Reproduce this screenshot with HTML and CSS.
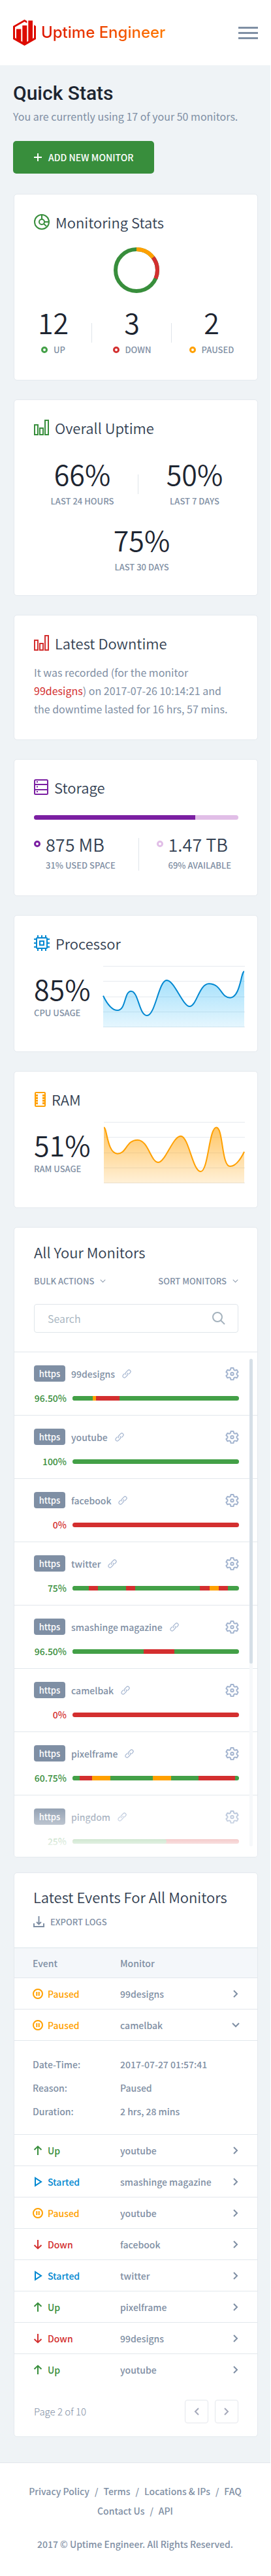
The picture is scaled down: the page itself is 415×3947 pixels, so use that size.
FILE: index.html
```html
<!DOCTYPE html>
<html lang="en">
<head>
<meta charset="utf-8">
<meta name="viewport" content="width=device-width, initial-scale=1">
<title>Uptime Engineer</title>
<link rel="stylesheet" href="styles.css">
</head>
<body>
<svg class="sprite" aria-hidden="true">
  <symbol id="i-link" viewBox="0 0 14 14"><path d="M6 8.200a2.600 2.600 0 0 1 0-3.600l2.700-2.800a2.500 2.500 0 0 1 3.600 3.600L10.600 7M8 5.800a2.600 2.600 0 0 1 0 3.600l-2.700 2.800a2.500 2.500 0 0 1-3.600-3.600L3.400 7"/></symbol>
  <symbol id="i-gear" viewBox="-1 0 21 20"><path d="M7.600 1h3.800l.8 2.900 1.600.9 2.900-.8 1.900 3.200-2.100 2.100v1.600l2.100 2.100-1.900 3.200-2.900-.8-1.600.9-.8 2.900H7.600l-.8-2.900-1.600-.9-2.900.8L.4 13l2.100-2.100V9.300L.4 7.200 2.300 4l2.900.8 1.600-.9z"/><circle cx="9.500" cy="10.100" r="2.200"/></symbol>
  <symbol id="i-right" viewBox="0 0 8 12"><path d="M1 1l5 5-5 5"/></symbol>
  <symbol id="i-left" viewBox="0 0 8 12"><path d="M7 1L2 6l5 5"/></symbol>
  <symbol id="i-down" viewBox="0 0 12 8"><path d="M1 1l5 5 5-5"/></symbol>
  <symbol id="i-bars" viewBox="0 0 23 24"><path d="M1 8h5v15H1zM9 13h5v10H9zM17 1h5v22h-5z"/></symbol>
  <symbol id="i-pause" viewBox="0 0 16 16"><circle cx="8" cy="8" r="7"/><path d="M6.300 5v6M9.700 5v6"/></symbol>
  <symbol id="i-up" viewBox="0 0 16 16"><path d="M8 15V2M2.500 7L8 1.800 13.500 7"/></symbol>
  <symbol id="i-dn" viewBox="0 0 16 16"><path d="M8 1v13M2.500 9L8 14.200 13.500 9"/></symbol>
  <symbol id="i-play" viewBox="0 0 16 16"><path d="M4 2.200v11.600L13 8z"/></symbol>
</svg>

<header class="topbar">
  <a class="brand" href="#">
    <svg class="brand-mark" viewBox="0 0 35 40" aria-hidden="true"><path d="M17.500 0 21.300 2.200V5.400L17.500 3.200 3 11.600V28L5 29.200V14.500H12.300V33L14.300 34V9H21.300V34L23.300 33V1.500H30V29.200L32 28V8.300L35 10V30L17.500 40 0 30V10Z"/></svg>
    <span class="brand-name">Uptime Engineer</span>
  </a>
  <button class="menu" aria-label="Menu"><span></span><span></span><span></span></button>
</header>

<main class="page">
  <h1 class="page-title">Quick Stats</h1>
  <p class="page-sub">You are currently using 17 of your 50 monitors.</p>
  <button class="add">
    <svg class="plus" viewBox="0 0 12 12" aria-hidden="true"><path d="M6 0v12M0 6h12"/></svg>ADD NEW MONITOR
  </button>

  <div class="cards">
    <section class="card">
      <h2 class="head">
        <svg class="icon24 green" viewBox="0 0 24 24" aria-hidden="true"><circle cx="12" cy="12" r="11"/><circle cx="12" cy="12" r="4"/><path d="M12 1v7M16 12h7M15 15l4 3.500"/></svg>
        Monitoring Stats
      </h2>
      <svg class="donut" viewBox="0 0 70 70" role="img" aria-label="12 up, 3 down, 2 paused">
        <circle class="d-up" cx="35" cy="35" r="32"/>
        <circle class="d-down" cx="35" cy="35" r="32" pathLength="100"/>
        <circle class="d-paused" cx="35" cy="35" r="32" pathLength="100"/>
      </svg>
      <div class="stats three">
        <div class="stat"><span class="num">12</span><span class="label"><i class="dot up"></i>UP</span></div>
        <div class="stat"><span class="num">3</span><span class="label"><i class="dot down"></i>DOWN</span></div>
        <div class="stat"><span class="num">2</span><span class="label"><i class="dot paused"></i>PAUSED</span></div>
      </div>
    </section>

    <section class="card tight">
      <h2 class="head"><svg class="icon23 green" aria-hidden="true"><use href="#i-bars"/></svg>Overall Uptime</h2>
      <div class="stats two">
        <div class="stat"><span class="num">66%</span><span class="label">LAST 24 HOURS</span></div>
        <div class="stat"><span class="num">50%</span><span class="label">LAST 7 DAYS</span></div>
        <div class="stat wide"><span class="num">75%</span><span class="label">LAST 30 DAYS</span></div>
      </div>
    </section>

    <section class="card tight">
      <h2 class="head"><svg class="icon23 red" aria-hidden="true"><use href="#i-bars"/></svg>Latest Downtime</h2>
      <p class="note">It was recorded (for the monitor <a href="#">99designs</a>) on 2017-07-26 10:14:21 and the downtime lasted for 16 hrs, 57 mins.</p>
    </section>

    <section class="card">
      <h2 class="head">
        <svg class="icon22 purple" viewBox="0 0 22 24" aria-hidden="true"><rect x="1" y="1" width="20" height="22" rx="1.500"/><path d="M1 8h20M1 16h20M4 4h2M4 11.500h2M4 19h2"/></svg>
        Storage
      </h2>
      <div class="bar storage"><span class="used" style="width:79%"></span></div>
      <div class="space">
        <div class="amount"><i class="dot used-dot"></i><div><span class="size">875 MB</span><span class="label">31% USED SPACE</span></div></div>
        <div class="amount"><i class="dot free-dot"></i><div><span class="size">1.47 TB</span><span class="label">69% AVAILABLE</span></div></div>
      </div>
    </section>

    <section class="card">
      <h2 class="head">
        <svg class="icon24 blue" viewBox="0 0 24 24" aria-hidden="true"><rect x="4" y="4" width="16" height="16" rx="1"/><rect x="9" y="9" width="6" height="6"/><path d="M6 0v4M12 0v4M18 0v4M6 20v4M12 20v4M18 20v4M0 6h4M0 12h4M0 18h4M20 6h4M20 12h4M20 18h4"/></svg>
        Processor
      </h2>
      <div class="usage">
        <div class="reading"><span class="num">85%</span><span class="label">CPU USAGE</span></div>
        <svg class="chart cpu" viewBox="0 0 217 95" aria-hidden="true">
          <defs><linearGradient id="g-cpu" x1="0" y1="0" x2="0" y2="1"><stop offset="0" stop-color="#03a9f4" stop-opacity=".4"/><stop offset="1" stop-color="#03a9f4" stop-opacity=".1"/></linearGradient></defs>
          <path class="grid" d="M0 .5h217M0 23.500h217M0 47.500h217M0 70.500h217M0 93.500h217"/>
          <path class="area" fill="url(#g-cpu)" d="M0 45.700C5 56 12 68 22 68C35 68 32 38.700 42.700 38.700C54 38.700 55 76 67 76C80 76 85 22 97.300 22C109 22 122 62 132.300 62C143 62 147 27.300 162 27.300C181 27.300 180 48.700 194.300 48.700C210 48.700 211 8.500 216 8.500V94H0z"/>
          <path class="line" d="M0 45.700C5 56 12 68 22 68C35 68 32 38.700 42.700 38.700C54 38.700 55 76 67 76C80 76 85 22 97.300 22C109 22 122 62 132.300 62C143 62 147 27.300 162 27.300C181 27.300 180 48.700 194.300 48.700C210 48.700 211 8.500 216 8.500"/>
        </svg>
      </div>
    </section>

    <section class="card">
      <h2 class="head">
        <svg class="icon18 amber" viewBox="0 0 18 24" aria-hidden="true"><rect x="2" y="2" width="15" height="21" rx="1"/><path class="pins" d="M4.500 5v15M14.500 5v15"/></svg>
        RAM
      </h2>
      <div class="usage">
        <div class="reading"><span class="num">51%</span><span class="label">RAM USAGE</span></div>
        <svg class="chart ram" viewBox="0 0 217 95" aria-hidden="true">
          <defs><linearGradient id="g-ram" x1="0" y1="0" x2="0" y2="1"><stop offset="0" stop-color="#ffa000" stop-opacity=".6"/><stop offset="1" stop-color="#ffa000" stop-opacity=".15"/></linearGradient></defs>
          <path class="grid" d="M1 .5h216M1 23.500h216M1 47.500h216M1 70.500h216M1 93.500h216"/>
          <path class="area" fill="url(#g-ram)" d="M1 8.500C6 8.500 6 48.700 22 48.700C36 48.700 35 27.700 52.700 27.700C69 27.700 73 62 84.300 62C95 62 107 21.700 118.700 21.700C131 21.700 137 76 149.300 76C161 76 162 8.500 173.300 8.500C184 8.500 181 68 194.300 68C204 68 211 56 216 45.700V94H1z"/>
          <path class="line" d="M1 8.500C6 8.500 6 48.700 22 48.700C36 48.700 35 27.700 52.700 27.700C69 27.700 73 62 84.300 62C95 62 107 21.700 118.700 21.700C131 21.700 137 76 149.300 76C161 76 162 8.500 173.300 8.500C184 8.500 181 68 194.300 68C204 68 211 56 216 45.700"/>
        </svg>
      </div>
    </section>

    <section class="card monitors">
      <div class="monitors-top">
        <h2 class="title">All Your Monitors</h2>
        <div class="tools">
          <button class="tool" aria-haspopup="true">BULK ACTIONS<svg class="caret" aria-hidden="true"><use href="#i-down"/></svg></button>
          <button class="tool" aria-haspopup="true">SORT MONITORS<svg class="caret" aria-hidden="true"><use href="#i-down"/></svg></button>
        </div>
        <label class="search">
          <input type="search" placeholder="Search" aria-label="Search">
          <svg viewBox="0 0 20 20" aria-hidden="true"><circle cx="8" cy="8" r="7"/><path d="M13 13l6 6"/></svg>
        </label>
      </div>
      <ul class="list">
        <li class="monitor">
          <div class="line1"><span class="tag">https</span><a class="name" href="#">99designs<svg class="link" aria-hidden="true"><use href="#i-link"/></svg></a><button class="gear" aria-label="Settings"><svg aria-hidden="true"><use href="#i-gear"/></svg></button></div>
          <div class="line2"><span class="pct">96.50%</span><div class="bar"><span class="g" style="width:12.200%"></span><span class="o" style="width:2%"></span><span class="r" style="width:14.100%"></span></div></div>
        </li>
        <li class="monitor">
          <div class="line1"><span class="tag">https</span><a class="name" href="#">youtube<svg class="link" aria-hidden="true"><use href="#i-link"/></svg></a><button class="gear" aria-label="Settings"><svg aria-hidden="true"><use href="#i-gear"/></svg></button></div>
          <div class="line2"><span class="pct">100%</span><div class="bar"></div></div>
        </li>
        <li class="monitor">
          <div class="line1"><span class="tag">https</span><a class="name" href="#">facebook<svg class="link" aria-hidden="true"><use href="#i-link"/></svg></a><button class="gear" aria-label="Settings"><svg aria-hidden="true"><use href="#i-gear"/></svg></button></div>
          <div class="line2"><span class="pct zero">0%</span><div class="bar"><span class="r" style="width:100%"></span></div></div>
        </li>
        <li class="monitor">
          <div class="line1"><span class="tag">https</span><a class="name" href="#">twitter<svg class="link" aria-hidden="true"><use href="#i-link"/></svg></a><button class="gear" aria-label="Settings"><svg aria-hidden="true"><use href="#i-gear"/></svg></button></div>
          <div class="line2"><span class="pct">75%</span><div class="bar"><span class="g" style="width:9.800%"></span><span class="r" style="width:5.500%"></span><span class="g" style="width:16.900%"></span><span class="r" style="width:5.500%"></span><span class="g" style="width:38.900%"></span><span class="r" style="width:5.600%"></span><span class="o" style="width:5.600%"></span><span class="r" style="width:5.500%"></span></div></div>
        </li>
        <li class="monitor">
          <div class="line1"><span class="tag">https</span><a class="name" href="#">smashinge magazine<svg class="link" aria-hidden="true"><use href="#i-link"/></svg></a><button class="gear" aria-label="Settings"><svg aria-hidden="true"><use href="#i-gear"/></svg></button></div>
          <div class="line2"><span class="pct">96.50%</span><div class="bar"><span class="g" style="width:42.700%"></span><span class="r" style="width:18.400%"></span></div></div>
        </li>
        <li class="monitor">
          <div class="line1"><span class="tag">https</span><a class="name" href="#">camelbak<svg class="link" aria-hidden="true"><use href="#i-link"/></svg></a><button class="gear" aria-label="Settings"><svg aria-hidden="true"><use href="#i-gear"/></svg></button></div>
          <div class="line2"><span class="pct zero">0%</span><div class="bar"><span class="r" style="width:100%"></span></div></div>
        </li>
        <li class="monitor">
          <div class="line1"><span class="tag">https</span><a class="name" href="#">pixelframe<svg class="link" aria-hidden="true"><use href="#i-link"/></svg></a><button class="gear" aria-label="Settings"><svg aria-hidden="true"><use href="#i-gear"/></svg></button></div>
          <div class="line2"><span class="pct">60.75%</span><div class="bar"><span class="g" style="width:4.300%"></span><span class="r" style="width:7.300%"></span><span class="o" style="width:11%"></span><span class="g" style="width:25.600%"></span><span class="o" style="width:11%"></span><span class="g" style="width:16.500%"></span><span class="r" style="width:22%"></span></div></div>
        </li>
        <li class="monitor">
          <div class="line1"><span class="tag">https</span><a class="name" href="#">pingdom<svg class="link" aria-hidden="true"><use href="#i-link"/></svg></a><button class="gear" aria-label="Settings"><svg aria-hidden="true"><use href="#i-gear"/></svg></button></div>
          <div class="line2"><span class="pct">25%</span><div class="bar red-base"><span class="g round" style="width:56.500%"></span></div></div>
        </li>
      </ul>
      <div class="fade" aria-hidden="true"></div>
      <div class="scroll" aria-hidden="true"><span></span></div>
    </section>

    <section class="card events">
      <div class="events-top">
        <h2 class="title">Latest Events For All Monitors</h2>
        <button class="tool export"><svg viewBox="0 0 17 18" aria-hidden="true"><path d="M8.500 0v12M5 9l3.500 3.300L12 9M1 11v5h15v-5"/></svg>EXPORT LOGS</button>
      </div>
      <table class="log">
        <colgroup><col class="c-event"><col><col class="c-go"></colgroup>
        <thead><tr><th>Event</th><th colspan="2">Monitor</th></tr></thead>
        <tbody>
          <tr><td><span class="ev paused-t"><svg aria-hidden="true"><use href="#i-pause"/></svg>Paused</span></td><td>99designs</td><td><button class="go" aria-label="Show details"><svg aria-hidden="true"><use href="#i-right"/></svg></button></td></tr>
          <tr><td><span class="ev paused-t"><svg aria-hidden="true"><use href="#i-pause"/></svg>Paused</span></td><td>camelbak</td><td><button class="go open" aria-label="Hide details"><svg aria-hidden="true"><use href="#i-down"/></svg></button></td></tr>
          <tr class="detail"><td colspan="3"><dl><dt>Date-Time:</dt><dd>2017-07-27 01:57:41</dd><dt>Reason:</dt><dd>Paused</dd><dt>Duration:</dt><dd>2 hrs, 28 mins</dd></dl></td></tr>
          <tr><td><span class="ev up-t"><svg aria-hidden="true"><use href="#i-up"/></svg>Up</span></td><td>youtube</td><td><button class="go" aria-label="Show details"><svg aria-hidden="true"><use href="#i-right"/></svg></button></td></tr>
          <tr><td><span class="ev start-t"><svg aria-hidden="true"><use href="#i-play"/></svg>Started</span></td><td>smashinge magazine</td><td><button class="go" aria-label="Show details"><svg aria-hidden="true"><use href="#i-right"/></svg></button></td></tr>
          <tr><td><span class="ev paused-t"><svg aria-hidden="true"><use href="#i-pause"/></svg>Paused</span></td><td>youtube</td><td><button class="go" aria-label="Show details"><svg aria-hidden="true"><use href="#i-right"/></svg></button></td></tr>
          <tr><td><span class="ev down-t"><svg aria-hidden="true"><use href="#i-dn"/></svg>Down</span></td><td>facebook</td><td><button class="go" aria-label="Show details"><svg aria-hidden="true"><use href="#i-right"/></svg></button></td></tr>
          <tr><td><span class="ev start-t"><svg aria-hidden="true"><use href="#i-play"/></svg>Started</span></td><td>twitter</td><td><button class="go" aria-label="Show details"><svg aria-hidden="true"><use href="#i-right"/></svg></button></td></tr>
          <tr><td><span class="ev up-t"><svg aria-hidden="true"><use href="#i-up"/></svg>Up</span></td><td>pixelframe</td><td><button class="go" aria-label="Show details"><svg aria-hidden="true"><use href="#i-right"/></svg></button></td></tr>
          <tr><td><span class="ev down-t"><svg aria-hidden="true"><use href="#i-dn"/></svg>Down</span></td><td>99designs</td><td><button class="go" aria-label="Show details"><svg aria-hidden="true"><use href="#i-right"/></svg></button></td></tr>
          <tr><td><span class="ev up-t"><svg aria-hidden="true"><use href="#i-up"/></svg>Up</span></td><td>youtube</td><td><button class="go" aria-label="Show details"><svg aria-hidden="true"><use href="#i-right"/></svg></button></td></tr>
        </tbody>
      </table>
      <nav class="pager" aria-label="Pages">
        <span>Page 2 of 10</span>
        <button aria-label="Previous page"><svg aria-hidden="true"><use href="#i-left"/></svg></button>
        <button aria-label="Next page"><svg aria-hidden="true"><use href="#i-right"/></svg></button>
      </nav>
    </section>
  </div>
</main>

<footer class="foot">
  <nav class="foot-links">
    <a href="#">Privacy Policy</a><span>/</span><a href="#">Terms</a><span>/</span><a href="#">Locations &amp; IPs</a><span>/</span><a href="#">FAQ</a>
  </nav>
  <nav class="foot-links"><a href="#">Contact Us</a><span>/</span><a href="#">API</a></nav>
  <p class="copy">2017 © Uptime Engineer. All Rights Reserved.</p>
</footer>
</body>
</html>
```

FILE: styles.css
```css
* { box-sizing: border-box; }

body {
  margin: 0;
  padding-right: 1px;
  background: #fff;
  color: #7f8fa4;
  font: 500 14px/20px "Noto Sans CJK SC", "Noto Sans", sans-serif;
}

h1, h2, p, ul, dl, dd { margin: 0; padding: 0; }
ul { list-style: none; }
a { color: inherit; text-decoration: none; }
button {
  margin: 0;
  padding: 0;
  border: 0;
  background: none;
  color: inherit;
  font: inherit;
  cursor: pointer;
}
svg { display: block; flex: none; fill: none; stroke: currentColor; stroke-width: 2; }
.sprite { position: absolute; width: 0; height: 0; }

.green { color: #388e3c; }
.red { color: #d32f2f; }
.purple { color: #7b1fa2; }
.blue { color: #0288d1; }
.amber { color: #ffa000; }

/* Header */
.topbar {
  display: flex;
  align-items: center;
  justify-content: space-between;
  height: 100px;
  padding: 0 19px 0 20px;
}
.brand { display: flex; align-items: center; gap: 8px; }
.brand-mark { width: 35px; height: 40px; fill: #dd0b00; stroke: none; }
.brand-name {
  font: 500 24px/32px Inter, sans-serif;
  background: linear-gradient(90deg, #dd1500, #ff7800);
  background-clip: text;
  -webkit-background-clip: text;
  color: transparent;
}
.menu { display: grid; gap: 5px; width: 30px; }
.menu span { height: 3px; background: #7f8fa4; }

/* Page */
.page {
  padding: 25px 19px 39px 20px;
  background: #eff3f6;
  border-bottom: 1px solid #e2e7ec;
}
.page-title { color: #1d2531; font: 500 30px/36px Roboto, sans-serif; }
.page-sub { margin-top: 3px; font-size: 16px; line-height: 28px; font-weight: 400; }
.add {
  display: flex;
  align-items: center;
  gap: 10px;
  height: 50px;
  margin-top: 24px;
  padding: 0 32px;
  border-radius: 5px;
  background: #388e3c;
  color: #fff;
  font-size: 14px;
}
.plus { width: 12px; height: 12px; }

.cards { display: grid; gap: 29px; margin: 31px 0 0 1px; }
.card {
  position: relative;
  min-width: 0;
  padding: 30px 29px 36px 30px;
  border: 1px solid #e4e9ee;
  border-radius: 5px;
  background: #fff;
}
.tight { padding-bottom: 33px; }
.head {
  display: flex;
  align-items: center;
  gap: 9px;
  height: 24px;
  color: #333f52;
  font-size: 22px;
  line-height: 24px;
  font-weight: 350;
}
.icon24 { width: 24px; height: 24px; }
.icon23 { width: 23px; height: 24px; }
.icon22 { width: 22px; height: 24px; }
.icon18 { width: 18px; height: 24px; }
.pins { stroke-width: 3; stroke-dasharray: 3 1; }

.donut { width: 70px; height: 70px; margin: 27px auto 0; stroke-width: 6; }
.d-up { stroke: #388e3c; }
.d-down { stroke: #d32f2f; stroke-dasharray: 17 83; stroke-dashoffset: 10.5; }
.d-paused { stroke: #ffa000; stroke-dasharray: 14.5 85.5; stroke-dashoffset: 25; }

.stats { display: grid; }
.three { grid-template-columns: 119fr 122fr 122fr; margin: 20px -20px 0 -30px; }
.two { grid-template-columns: 1fr 1fr; row-gap: 24px; margin: 34px -19px 0 -12px; }
.stat { position: relative; display: grid; justify-items: center; row-gap: 9px; }
.wide { grid-column: 1 / -1; padding-left: 10px; }
.stat:not(:last-child)::after {
  content: "";
  position: absolute;
  right: 0;
  top: 26px;
  width: 1px;
  height: 30px;
  background: #dfe5ea;
}
.two .stat:nth-child(2)::after { display: none; }
.num { color: #1d2531; font-size: 43px; line-height: 48px; font-weight: 350; }
.label { display: flex; align-items: center; gap: 9px; font-size: 13px; line-height: 20px; }
.dot { flex: none; width: 10px; height: 10px; border: 3px solid; border-radius: 50%; }
.up { border-color: #43a047; }
.down { border-color: #d32f2f; }
.paused { border-color: #ffa000; }
.used-dot { border-color: #7b1fa2; }
.free-dot { border-color: #e1bee7; }

.note { margin-top: 19px; font-size: 16px; line-height: 28px; font-weight: 400; }
.note a { color: #d32f2f; }

.bar {
  display: flex;
  height: 7px;
  border-radius: 4px;
  background: #43a047;
  overflow: hidden;
}
.storage { margin-top: 31px; background: #e1bee7; }
.used { background: #7b1fa2; }
.space { display: grid; grid-template-columns: 160fr 152fr; margin-top: 20px; position: relative; }
.amount { position: relative; display: flex; gap: 8px; }
.amount:first-child::after {
  content: "";
  position: absolute;
  right: 0;
  top: 8px;
  width: 1px;
  height: 50px;
  background: #dfe5ea;
}
.amount + .amount { padding-left: 27px; }
.amount .dot { margin-top: 12px; }
.amount .label { margin-top: 4px; white-space: nowrap; }
.size { display: block; color: #333f52; font-size: 27px; line-height: 36px; font-weight: 350; white-space: nowrap; }

.usage { display: flex; gap: 20px; margin: 23px -10px 0 0; }
.reading { display: grid; align-content: start; row-gap: 4px; width: 86px; padding-top: 10px; }
.chart { flex: 1; min-width: 0; height: 95px; overflow: visible; }
.grid { stroke: #e6eaef; stroke-width: 1; }
.area { stroke: none; }
.cpu .line { stroke: #0288d1; }
.ram .line { stroke: #ffa000; }

/* Monitors */
.monitors, .events { padding: 0; overflow: hidden; }
.monitors-top { padding: 23px 29px 29px 30px; }
.title { color: #333f52; font-size: 22px; line-height: 28px; font-weight: 350; }
.tools { display: flex; justify-content: space-between; margin-top: 21px; }
.tool { display: flex; align-items: center; gap: 9px; font-size: 13px; line-height: 20px; }
.caret { width: 9px; height: 6px; stroke-width: 1.4; }
.search {
  display: flex;
  align-items: center;
  height: 44px;
  margin-top: 25px;
  padding: 0 19px 0 20px;
  border: 1px solid #dfe5ea;
  border-radius: 4px;
}
.search input {
  flex: 1;
  min-width: 0;
  padding: 0;
  border: 0;
  outline: 0;
  background: none;
  color: #7f8fa4;
  font: 350 16px/24px "Noto Sans CJK SC", "Noto Sans", sans-serif;
}
.search input::placeholder { color: #a4b2bd; opacity: 1; }
.search svg { width: 20px; height: 20px; color: #a4b2bd; }

.monitor { height: 97px; padding: 20px 28px 0 30px; border-top: 1px solid #e2e7ec; }
.monitor:last-child { height: 95px; }
.line1 { display: flex; align-items: center; height: 25px; }
.tag {
  width: 48px;
  border-radius: 4px;
  background: #7f8fa4;
  color: #fff;
  font-size: 13px;
  line-height: 25px;
  text-align: center;
}
.name { display: flex; align-items: center; gap: 11px; margin-left: 9px; }
.link { width: 14px; height: 14px; color: #a3b4cf; stroke-width: 1.2; stroke-linecap: round; }
.gear { margin-left: auto; color: #a3b4cf; }
.gear svg { width: 21px; height: 20px; stroke-linejoin: round; }
.line2 { display: flex; align-items: center; margin-top: 15px; }
.line2 .bar { flex: 1; }
.pct { width: 50px; margin-right: 9px; color: #388e3c; text-align: right; }
.zero { color: #d32f2f; }
.g { background: #43a047; }
.r, .red-base { background: #d32f2f; }
.o { background: #ffa000; }
.round { border-radius: 0 4px 4px 0; }
.scroll {
  position: absolute;
  right: 7px;
  top: 201px;
  bottom: 16px;
  width: 5px;
  border-radius: 3px;
  background: #f6f8fa;
}
.scroll span { display: block; height: 467px; border-radius: 3px; background: #d6dfe7; }
.fade {
  position: absolute;
  inset: auto 0 0 0;
  height: 88px;
  background: linear-gradient(rgba(255, 255, 255, 0), #fff 92%);
  pointer-events: none;
}

/* Events */
.events { margin-top: -6px; }
.events-top { padding: 22px 29px 29px; }
.export { margin-top: 15px; gap: 9px; }
.export svg { width: 17px; height: 18px; }
.log { width: 100%; border-collapse: separate; border-spacing: 0; table-layout: fixed; }
.c-event { width: 162px; }
.c-go { width: 39px; }
.log th, .log td { padding: 0; height: 48px; text-align: left; font-weight: 500; border-top: 1px solid #e2e7ec; white-space: nowrap; }
.log th { height: 46px; background: #f4f7fa; border-color: #dbe4ea; }
.log th:first-child, .log td:first-child { padding-left: 28px; }
.ev { display: flex; align-items: center; gap: 7px; }
.ev svg { width: 16px; height: 16px; }
.paused-t { color: #ffa000; }
.up-t { color: #388e3c; }
.down-t { color: #d32f2f; }
.start-t { color: #0288d1; }
.go { display: block; width: 12px; }
.go svg { width: 8px; height: 12px; margin: 0 auto; }
.go.open svg { width: 12px; height: 8px; }
.log .detail td { height: 144px; }
.detail dl { display: grid; grid-template-columns: 134px 1fr; line-height: 36px; }
.pager { display: flex; align-items: center; gap: 10px; padding: 23px 29px 20px 30px; font-size: 15px; font-weight: 300; }
.pager span { margin-right: auto; }
.pager button {
  display: grid;
  place-items: center;
  width: 36px;
  height: 36px;
  border: 1px solid #e4e7ec;
  border-radius: 4px;
  color: #a5a9ba;
}
.pager svg { width: 8px; height: 12px; }

/* Footer */
.foot { padding: 28px 20px 39px; text-align: center; }
.foot-links { display: flex; justify-content: center; gap: 8px; line-height: 30px; white-space: nowrap; }
.copy { margin-top: 26px; line-height: 20px; white-space: nowrap; }
```
